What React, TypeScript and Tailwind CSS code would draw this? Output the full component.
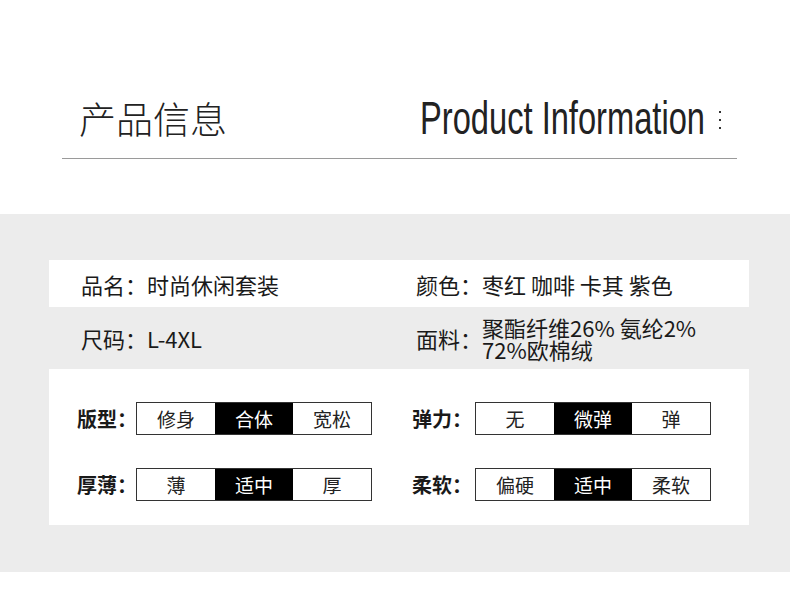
const leftOptions = [
  { label: "版型：", options: ["修身", "合体", "宽松"], active: 1 },
  { label: "厚薄：", options: ["薄", "适中", "厚"], active: 1 },
];

const rightOptions = [
  { label: "弹力：", options: ["无", "微弹", "弹"], active: 1 },
  { label: "柔软：", options: ["偏硬", "适中", "柔软"], active: 1 },
];

function OptionRow({
  label,
  options,
  active,
  labelWidth,
}: {
  label: string;
  options: string[];
  active: number;
  labelWidth: string;
}) {
  return (
    <div className="flex items-center">
      <span className={`${labelWidth} shrink-0 whitespace-nowrap text-[20px] font-bold text-[#1a1a1a] leading-none`}>
        {label}
      </span>
      <div className="flex shrink-0 w-[236px] h-[33px] border border-[#333]">
        {options.map((opt, i) => (
          <div
            key={opt}
            className={`flex-1 flex items-center justify-center text-[19px] leading-none ${
              i === active ? "bg-black text-white" : "bg-white text-[#222]"
            }`}
          >
            {opt}
          </div>
        ))}
      </div>
    </div>
  );
}

export default function App() {
  return (
    <div className="w-[790px] h-[604px] bg-white font-['Noto_Sans_CJK_SC',sans-serif] text-[#1a1a1a]">
      {/* Title */}
      <div className="h-[214px] pt-[95px]">
        <div className="ml-[62px] w-[675px]">
          <div className="flex items-center h-[46px] pl-[17px]">
            <span className="w-[341px] shrink-0 text-[37px] font-light leading-none text-[#222]">产品信息</span>
            <div className="w-[285px] shrink-0">
              <span className="inline-block origin-left scale-x-[0.71] font-['Liberation_Sans',sans-serif] text-[46px] leading-none text-[#222] whitespace-nowrap">
                Product Information
              </span>
            </div>
            <div className="ml-[14px] mt-[4px] flex flex-col gap-[6px]">
              <span className="w-[2px] h-[2px] bg-[#333]" />
              <span className="w-[2px] h-[2px] bg-[#333]" />
              <span className="w-[2px] h-[2px] bg-[#333]" />
            </div>
          </div>
          <div className="mt-[17px] h-px bg-[#9a9a9a]" />
        </div>
      </div>

      {/* Info band */}
      <div className="h-[358px] bg-[#ececec] pt-[46px]">
        <div className="ml-[49px] w-[700px]">
          <div className="h-[47px] bg-white flex items-center text-[22px] leading-none">
            <div className="w-[367px] shrink-0 pl-[32px]">品名：时尚休闲套装</div>
            <div>颜色：枣红 咖啡 卡其 紫色</div>
          </div>

          <div className="h-[62px] flex items-center text-[22px] leading-none">
            <div className="w-[367px] shrink-0 pl-[32px]">尺码：L-4XL</div>
            <div className="flex items-center">
              <span>面料：</span>
              <div className="flex flex-col">
                <span className="leading-[22px]">聚酯纤维26% 氨纶2%</span>
                <span className="leading-[22px]">72%欧棉绒</span>
              </div>
            </div>
          </div>

          <div className="h-[156px] bg-white pt-[33px] flex flex-col gap-[33px]">
            {leftOptions.map((row, i) => (
              <div key={row.label} className="flex pl-[28px]">
                <div className="w-[335px] shrink-0">
                  <OptionRow {...row} labelWidth="w-[59px]" />
                </div>
                <OptionRow {...rightOptions[i]} labelWidth="w-[63px]" />
              </div>
            ))}
          </div>
        </div>
      </div>
    </div>
  );
}
